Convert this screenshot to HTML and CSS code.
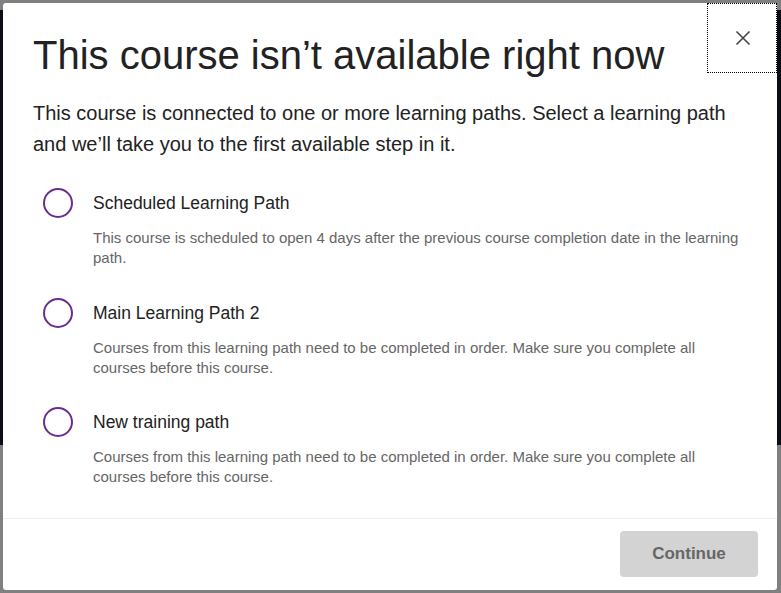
FILE: index.html
```html
<!DOCTYPE html>
<html lang="en">
<head>
<meta charset="utf-8">
<title>Course unavailable</title>
<link rel="stylesheet" href="styles.css">
</head>
<body>
<div class="page-under"></div>
<div class="modal" role="dialog" aria-modal="true">
  <button class="close" aria-label="Close">
    <svg width="16" height="16" viewBox="0 0 16 16"><path d="M1.5 1.5 L14.5 14.5 M14.5 1.5 L1.5 14.5" stroke="#444" stroke-width="1.6" fill="none"/></svg>
  </button>
  <div class="body">
    <h1 class="title">This course isn’t available right now</h1>
    <p class="intro">This course is connected to one or more learning paths. Select a learning path and we’ll take you to the first available step in it.</p>
    <ul class="paths">
      <li class="path">
        <span class="radio"></span>
        <div class="path-text">
          <div class="path-name">Scheduled Learning Path</div>
          <div class="path-desc">This course is scheduled to open 4 days after the previous course completion date in the learning path.</div>
        </div>
      </li>
      <li class="path">
        <span class="radio"></span>
        <div class="path-text">
          <div class="path-name">Main Learning Path 2</div>
          <div class="path-desc">Courses from this learning path need to be completed in order. Make sure you complete all courses before this course.</div>
        </div>
      </li>
      <li class="path">
        <span class="radio"></span>
        <div class="path-text">
          <div class="path-name">New training path</div>
          <div class="path-desc">Courses from this learning path need to be completed in order. Make sure you complete all courses before this course.</div>
        </div>
      </li>
    </ul>
  </div>
  <div class="footer">
    <button class="continue" disabled>Continue</button>
  </div>
</div>
</body>
</html>
```
FILE: styles.css
```css
html, body {
  margin: 0;
  padding: 0;
}
body {
  width: 781px;
  height: 593px;
  background: #808080;
  font-family: "Liberation Sans", Arial, sans-serif;
  overflow: hidden;
  position: relative;
}
.page-under {
  margin-top: 10px;
  height: 435px;
  background: #0b0e17;
}
.modal {
  position: absolute;
  left: 3px;
  top: 3px;
  width: 774px;
  height: 587px;
  background: #fff;
  border-radius: 3px;
  display: flex;
  flex-direction: column;
  box-sizing: border-box;
}
.close {
  position: absolute;
  top: 0;
  right: 0;
  width: 70px;
  height: 70px;
  border: 1px dotted #000;
  background: transparent;
  padding: 0;
  display: flex;
  align-items: center;
  justify-content: center;
  box-sizing: border-box;
  cursor: pointer;
}
.close svg { display: block; margin-left: 1px; margin-top: -1px; }
.body {
  flex: 1;
  padding: 26px 30px 0 30px;
}
.title {
  margin: 0;
  font-size: 40px;
  font-weight: 400;
  line-height: 52px;
  color: #222;
}
.intro {
  margin: 17px 0 0 0;
  font-size: 20px;
  line-height: 31px;
  color: #222;
}
.paths {
  list-style: none;
  margin: 28px 0 0 0;
  padding: 0;
  display: flex;
  flex-direction: column;
  gap: 29.5px;
}
.path {
  display: flex;
  gap: 20px;
  align-items: flex-start;
}
.radio {
  flex: none;
  width: 26px;
  height: 26px;
  border: 2px solid #6b2c91;
  border-radius: 50%;
  margin-left: 10px;
}
.path-name {
  font-size: 17.5px;
  line-height: 30px;
  color: #222;
}
.path-desc {
  margin-top: 10px;
  font-size: 15px;
  line-height: 20px;
  color: #666;
  max-width: 652px;
}
.footer {
  border-top: 1px solid #eee;
  padding: 12px 19px 13px 0;
  display: flex;
  justify-content: flex-end;
}
.continue {
  width: 138px;
  height: 46px;
  border: none;
  border-radius: 4px;
  background: #d3d3d3;
  color: #666;
  font-family: "Liberation Sans", Arial, sans-serif;
  font-size: 17px;
  font-weight: 700;
}
```
